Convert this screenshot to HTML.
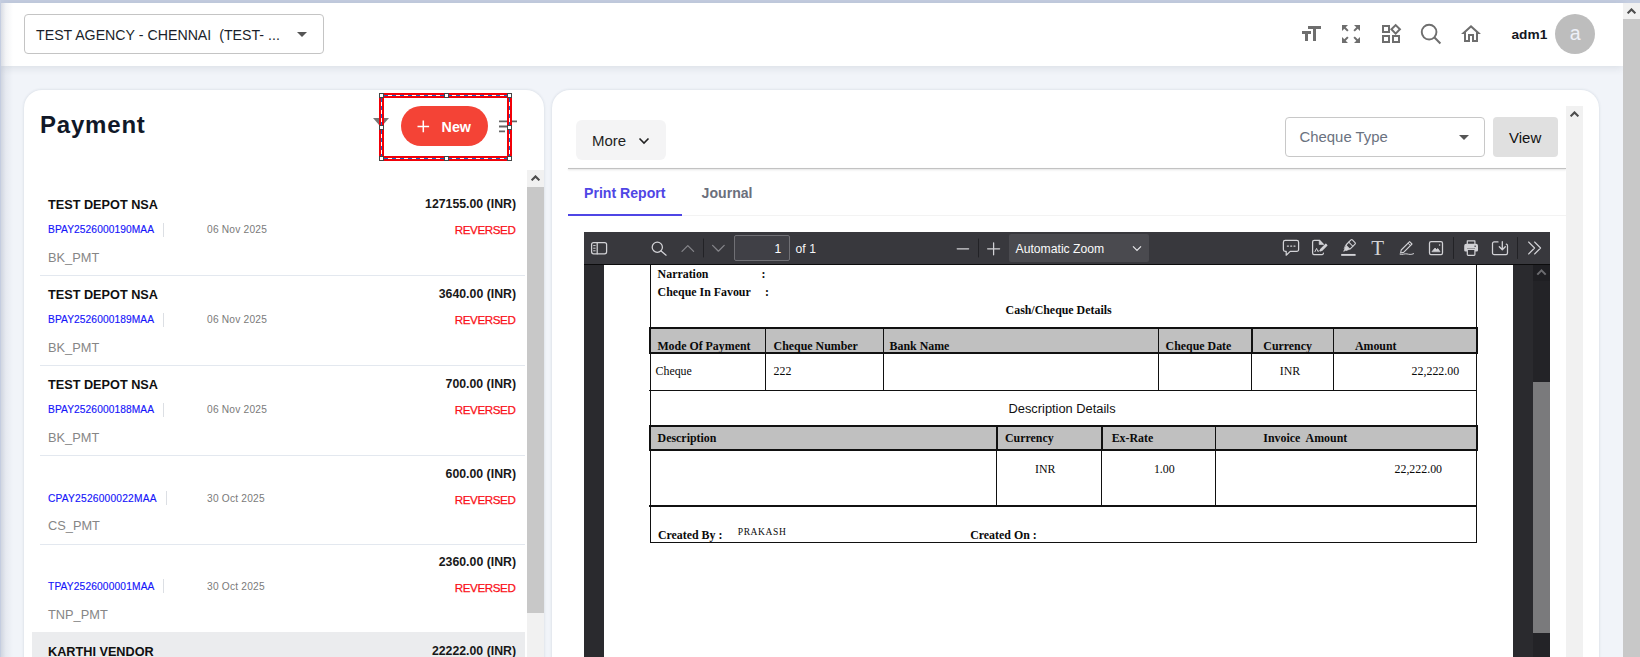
<!DOCTYPE html>
<html lang="en">
<head>
<meta charset="utf-8">
<title>Payment</title>
<style>
*{box-sizing:border-box;margin:0;padding:0}
html,body{width:1640px;height:657px;overflow:hidden}
body{position:relative;background:#f1f4f9;font-family:"Liberation Sans",sans-serif;color:#111;}
.abs{position:absolute}
.t{position:absolute;white-space:nowrap;line-height:1}
/* chrome strips */
#topstrip{left:0;top:0;width:1640px;height:3px;background:#c4cde0}
#leftstrip{left:0;top:0;width:1px;height:657px;background:#c4cde0}
#leftshade{left:1px;top:3px;width:12px;height:654px;background:linear-gradient(90deg,rgba(140,150,172,.32),rgba(140,150,172,.11) 40%,rgba(140,150,172,0))}
/* header */
#header{left:1px;top:3px;width:1622px;height:63px;background:#fff;box-shadow:0 2px 8px rgba(30,40,60,.10)}
#agency{left:24px;top:14px;width:300px;height:40px;border:1px solid #c4c4c4;border-radius:4px;background:#fff}
/* page scrollbar */
#pscroll{left:1623px;top:3px;width:17px;height:654px;background:#f1f1f1}
#pscroll .thumb{left:0;top:16px;width:17px;height:640px;background:#c8c8c8}
/* cards */
.card{background:#fff;border-radius:18px 18px 0 0;box-shadow:0 0 3px rgba(40,60,90,.16)}
#lcard{left:24px;top:90px;width:520px;height:580px}
#rcard{left:552px;top:90px;width:1047px;height:580px}

/* left card */
#title{left:40px;top:113px;font-size:24px;font-weight:700;color:#101828;letter-spacing:.8px}
#newbtn{left:401px;top:106px;width:87px;height:40px;border-radius:20px;background:#f44336}
.row{position:absolute;left:32px;width:493px;height:90px}
.row .nm{left:16px;top:13.8px;font-size:12.7px;font-weight:700;color:#101010}
.row .id{left:16px;top:39.5px;font-size:10.2px;letter-spacing:.1px;color:#1616fa;-webkit-text-stroke:.15px #1616fa}
.row .sep{position:absolute;left:131px;top:38px;width:1px;height:14px;background:#dcdfe4}
.row .dt{left:175px;top:39.9px;font-size:10.2px;letter-spacing:.21px;color:#7a7a7a}
.row .ty{left:16px;top:66.7px;font-size:12.8px;color:#868686}
.row .am{right:9px;top:13px;font-size:12.3px;font-weight:700;color:#181818}
.row .st{right:9.6px;top:39.4px;font-size:11.6px;letter-spacing:-.4px;color:#fa1018;-webkit-text-stroke:.25px #fa1018}
.row .ln{position:absolute;left:8px;right:0;bottom:-1px;height:1px;background:#e3e8ef}
#lscroll{left:527px;top:170px;width:17px;height:500px;background:#f1f1f1}
#lscroll .thumb{left:0;top:17px;width:17px;height:426px;background:#c8c8c8}

/* selection rect */
#sel{left:379px;top:93px;width:133px;height:68px;border:5px solid #f20008}
.dh{position:absolute;height:1px;background:repeating-linear-gradient(90deg,#1468c8 0 4px,#fff 4px 8px)}
.dv{position:absolute;width:1px;background:repeating-linear-gradient(180deg,#1468c8 0 4px,#fff 4px 8px)}
.hd{position:absolute;width:5px;height:5px;background:#fff;border:1px solid #454545}
/* right card */
#more{left:576px;top:120px;width:90px;height:40px;border-radius:6px;background:#f4f4f5}
#chq{left:1285px;top:117px;width:200px;height:40px;border:1px solid #c8c8c8;border-radius:4px;background:#fff}
#view{left:1493px;top:117px;width:65px;height:40px;border-radius:4px;background:#e0e0e0}
#hr1{left:568px;top:168px;width:998px;height:1px;background:#c2c2c2;box-shadow:0 1px 2px rgba(0,0,0,.16)}
#hr2{left:568px;top:215px;width:998px;height:1px;background:#f3f3f3}
#tabul{left:568px;top:213.6px;width:114px;height:2px;background:#4f46e5}
#rscroll{left:1566px;top:106px;width:17px;height:560px;background:#f1f1f1}
/* pdf viewer */
#pdf{left:584px;top:232px;width:966px;height:430px;background:#2a2a2e;overflow:hidden}
#pdftb{left:0;top:0;width:966px;height:33px;background:#38383d;border-bottom:1px solid #0c0c0d}
#pdfpage{left:20px;top:33px;width:909px;height:400px;background:#fff}
#pdfsb{left:949px;top:33px;width:17px;height:400px;background:#232327}
#pdfsb .btn{left:0;top:0;width:17px;height:16px;background:#1f1f23}
#pdfsb .thumb{left:0;top:117px;width:17px;height:251px;background:#7a7a7c}

/* pdf document */
.k{position:absolute;background:#111}
.pb{position:absolute;white-space:nowrap;line-height:1;font-family:"Liberation Serif",serif;font-weight:700;font-size:11.9px;color:#0a0a0a}
.pr{position:absolute;white-space:nowrap;line-height:1;font-family:"Liberation Serif",serif;font-size:11.9px;color:#0a0a0a}
</style>
</head>
<body>
<div class="abs" id="topstrip"></div>
<div class="abs" id="header"></div>
<div class="abs" id="leftstrip"></div>
<div class="abs" id="leftshade"></div>

<!-- HEADER CONTENT -->
<div class="abs" id="agency"></div>
<div class="t" style="left:36px;top:28px;font-size:14.2px;color:#1b1f2a">TEST AGENCY - CHENNAI&nbsp; (TEST- ...</div>
<svg class="abs" style="left:297px;top:32px" width="10" height="5" viewBox="0 0 10 5"><path d="M0 0h10L5 5z" fill="#555"/></svg>

<!-- HEADER ICONS -->
<svg class="abs" style="left:1299px;top:22px" width="24" height="24" viewBox="0 0 24 24"><path fill="#6e6e6e" d="M9 4v3h5v12h3V7h5V4H9zm-6 8h3v7h3v-7h3V9H3v3z"/></svg>
<svg class="abs" style="left:1339px;top:22px" width="24" height="24" viewBox="0 0 24 24"><path fill="#6e6e6e" d="M15 3l2.3 2.3-2.89 2.87 1.42 1.42L18.7 6.7 21 9V3h-6zM3 9l2.3-2.3 2.87 2.89 1.42-1.42L6.7 5.3 9 3H3v6zm6 12l-2.3-2.3 2.89-2.87-1.42-1.42L5.3 17.3 3 15v6h6zm12-6l-2.3 2.3-2.87-2.89-1.42 1.42 2.89 2.87L15 21h6v-6z"/></svg>
<svg class="abs" style="left:1379px;top:22px" width="24" height="24" viewBox="0 0 24 24"><path fill="#6e6e6e" d="M16.66 4.52l2.83 2.83-2.83 2.83-2.83-2.83 2.83-2.83M9 5v4H5V5h4m10 10v4h-4v-4h4M9 15v4H5v-4h4m7.66-13.31L11 7.34 16.66 13l5.66-5.66-5.66-5.65zM11 3H3v8h8V3zm10 10h-8v8h8v-8zm-10 0H3v8h8v-8z"/></svg>
<svg class="abs" style="left:1417px;top:20px" width="28" height="28" viewBox="1417 20 28 28"><circle cx="1429.1" cy="32.1" r="7.350" fill="none" stroke="#6e6e6e" stroke-width="1.9"/><path d="M1434.500 37.500l5.900 6" stroke="#6e6e6e" stroke-width="2" fill="none"/></svg>
<svg class="abs" style="left:1458.7px;top:22px" width="24" height="24" viewBox="0 0 24 24"><path fill="#6e6e6e" d="M12 5.69l5 4.5V18h-2v-6H9v6H7v-7.81l5-4.5M12 3L2 12h3v8h6v-6h2v6h6v-8h3L12 3z"/></svg>
<div class="t" style="left:1511.500px;top:28.300px;font-size:13.7px;font-weight:700;color:#15181f">adm1</div>
<div class="abs" style="left:1555px;top:14px;width:40px;height:40px;border-radius:50%;background:#bdbdbd"></div>
<div class="t" style="left:1569.700px;top:23.500px;font-size:19.500px;color:#eef0f8">a</div>

<!-- PAGE SCROLLBAR -->
<div class="abs" id="pscroll"><div class="abs thumb"></div>
<svg class="abs" style="left:4px;top:5px" width="9" height="6" viewBox="0 0 9 6"><path d="M.6 5.300l3.900-3.900 3.900 3.900" fill="none" stroke="#4d4d4d" stroke-width="2.100"/></svg>
</div>

<!-- CARDS -->
<div class="abs card" id="lcard"></div>
<div class="abs card" id="rcard"></div>

<!-- LEFT CARD CONTENT -->
<div class="t" id="title">Payment</div>
<svg class="abs" style="left:372px;top:117px" width="18" height="10" viewBox="0 0 18 10"><path d="M1 1h16L9.6 9.4h-1.2z" fill="#757575"/></svg>
<div class="abs" id="newbtn"></div>
<svg class="abs" style="left:417px;top:119.500px" width="13" height="13" viewBox="0 0 13 13"><path d="M6.300 0.600v11.600M0.500 6.400h11.600" stroke="#fff" stroke-width="1.5" fill="none"/></svg>
<div class="t" style="left:441.6px;top:120.2px;font-size:14.3px;font-weight:700;color:#fff">New</div>
<svg class="abs" style="left:498px;top:118.700px" width="20" height="16" viewBox="0 0 20 16"><path d="M1 2.300h18M1 7.500h11M1 12.400h6" stroke="#666" stroke-width="1.800" fill="none"/></svg>
<div class="row" style="top:185px;height:90px"><div class="t nm">TEST DEPOT NSA</div><div class="t id">BPAY2526000190MAA</div><div class="sep"></div><div class="t dt">06 Nov 2025</div><div class="t ty">BK_PMT</div><div class="t am">127155.00 (INR)</div><div class="t st">REVERSED</div><div class="ln"></div></div>
<div class="row" style="top:275px;height:90px"><div class="t nm">TEST DEPOT NSA</div><div class="t id">BPAY2526000189MAA</div><div class="sep"></div><div class="t dt">06 Nov 2025</div><div class="t ty">BK_PMT</div><div class="t am">3640.00 (INR)</div><div class="t st">REVERSED</div><div class="ln"></div></div>
<div class="row" style="top:365px;height:90px"><div class="t nm">TEST DEPOT NSA</div><div class="t id">BPAY2526000188MAA</div><div class="sep"></div><div class="t dt">06 Nov 2025</div><div class="t ty">BK_PMT</div><div class="t am">700.00 (INR)</div><div class="t st">REVERSED</div><div class="ln"></div></div>
<div class="row" style="top:455px;height:89px"><div class="t id" style="top:39px;letter-spacing:.22px">CPAY2526000022MAA</div><div class="sep" style="left:134px;top:36px"></div><div class="t dt" style="top:38.900px">30 Oct 2025</div><div class="t ty" style="top:65.400px">CS_PMT</div><div class="t am">600.00 (INR)</div><div class="t st" style="top:38.800px">REVERSED</div><div class="ln"></div></div>
<div class="row" style="top:544px;height:88px"><div class="t id" style="top:38.300px;letter-spacing:.16px">TPAY2526000001MAA</div><div class="sep" style="left:131px;top:35px"></div><div class="t dt" style="top:37.900px">30 Oct 2025</div><div class="t ty" style="top:65px">TNP_PMT</div><div class="t am" style="top:12px">2360.00 (INR)</div><div class="t st" style="top:37.600px">REVERSED</div></div>
<div class="row" style="top:632px;height:40px;background:#ebecee"><div class="t nm">KARTHI VENDOR</div><div class="t am">22222.00 (INR)</div></div>
<div class="abs" id="lscroll"><div class="abs thumb"></div>
<svg class="abs" style="left:4px;top:5px" width="9" height="6" viewBox="0 0 9 6"><path d="M.6 5.300l3.900-3.900 3.900 3.900" fill="none" stroke="#4d4d4d" stroke-width="2.100"/></svg>
</div>

<!-- SELECTION RECT -->
<div class="abs" id="sel"></div>
<div class="dh" style="left:381px;top:95px;width:129px;background-position:-5px 0"></div><div class="dh" style="left:381px;top:158px;width:129px;background-position:-5px 0"></div>
<div class="dv" style="left:381px;top:95px;height:64px;background-position:0 -5px"></div><div class="dv" style="left:509px;top:95px;height:64px;background-position:0 -5px"></div>
<div class="hd" style="left:379px;top:93px"></div><div class="hd" style="left:444px;top:93px"></div><div class="hd" style="left:507px;top:93px"></div>
<div class="hd" style="left:379px;top:125px"></div><div class="hd" style="left:507px;top:125px"></div>
<div class="hd" style="left:379px;top:156px"></div><div class="hd" style="left:444px;top:156px"></div><div class="hd" style="left:507px;top:156px"></div>

<!-- RIGHT CARD CONTENT -->
<div class="abs" id="more"></div>
<div class="t" style="left:592px;top:133px;font-size:15px;color:#1f1f1f">More</div>
<svg class="abs" style="left:638px;top:137px" width="12" height="8" viewBox="0 0 12 8"><path d="M1.5 1.5l4.5 4.5 4.5-4.5" fill="none" stroke="#222" stroke-width="1.6"/></svg>
<div class="abs" id="chq"></div>
<div class="t" style="left:1299.500px;top:129.600px;font-size:14.900px;color:#6b7280">Cheque Type</div>
<svg class="abs" style="left:1459px;top:135px" width="10" height="5" viewBox="0 0 10 5"><path d="M0 0h10L5 5z" fill="#555"/></svg>
<div class="abs" id="view"></div>
<div class="t" style="left:1509px;top:130px;font-size:15px;color:#111">View</div>
<div class="abs" id="hr1"></div>
<div class="abs" id="hr2"></div>
<div class="abs" id="tabul"></div>
<div class="t" style="left:584px;top:186px;font-size:14.1px;font-weight:700;color:#4f46e5">Print Report</div>
<div class="t" style="left:701.6px;top:186px;font-size:14.1px;font-weight:700;color:#6b6f7c">Journal</div>
<div class="abs" id="rscroll">
<svg class="abs" style="left:4px;top:5px" width="9" height="6" viewBox="0 0 9 6"><path d="M.6 5.300l3.900-3.900 3.900 3.900" fill="none" stroke="#4d4d4d" stroke-width="2.100"/></svg>
</div>

<!-- PDF VIEWER -->
<div class="abs" id="pdf">
<div class="abs" id="pdfpage"></div>
<div class="abs" id="pdfsb"><div class="abs btn"></div><svg class="abs" style="left:3px;top:3px" width="11" height="8" viewBox="0 0 11 8"><path d="M1.300 6.600l4.200-4.200 4.200 4.200" fill="none" stroke="#6c6c70" stroke-width="2"/></svg><div class="abs thumb"></div></div>
<div class="abs" id="pdftb"></div>
</div>

<!-- PDF TOOLBAR ICONS -->
<svg class="abs" style="left:584px;top:232px" width="966" height="32" viewBox="584 232 966 32" fill="none" stroke="#d2d2d6" stroke-width="1.25" stroke-linecap="round" stroke-linejoin="round">
<!-- sidebar toggle -->
<rect x="591.6" y="242.6" width="15" height="11.2" rx="2"/><path d="M597.2 242.6v11.2"/><path d="M593.6 245.6h1.6M593.6 248.2h1.6M593.6 250.8h1.6" stroke-width="1"/>
<!-- find -->
<circle cx="657.3" cy="247.2" r="5.1"/><path d="M661.1 251l5 4.2"/>
<!-- prev / next -->
<path d="M682 251.4l5.8-5.8 5.8 5.8" stroke="#85858a"/>
<path d="M703.5 239v18" stroke="#222226" stroke-width="1"/>
<path d="M712.6 245.4l5.8 5.8 5.8-5.8" stroke="#85858a"/>
<!-- zoom -->
<path d="M957.2 248.8h11.4"/>
<path d="M978.5 239v18" stroke="#222226" stroke-width="1"/>
<path d="M987.6 248.8h12M993.6 242.8v12"/>
<!-- comment -->
<path d="M1285.2 240.4h11.6a1.8 1.8 0 0 1 1.8 1.8v7.4a1.8 1.8 0 0 1-1.8 1.8h-6.6l-4 3.8v-3.8h-1a1.8 1.8 0 0 1-1.8-1.8v-7.4a1.8 1.8 0 0 1 1.8-1.8z"/>
<path d="M1287.4 246.1h1M1290.7 246.1h1M1294 246.1h1" stroke-width="1.3"/>
<!-- signature -->
<path d="M1323.4 253.2a1.6 1.6 0 0 1-1.6 1.5h-7.6a1.6 1.6 0 0 1-1.6-1.6v-11.2a1.6 1.6 0 0 1 1.6-1.6h5.2l3.8 3.8"/>
<path d="M1319.2 240.6v3.9h3.9z" fill="#d2d2d6" stroke-width=".6"/>
<path d="M1315 251.6l1.6-3.2 1.2 3 1.4-.6" stroke-width="1"/>
<path d="M1326.9 245.3l-5.2 5.2-1.5.4.4-1.5 5.2-5.2z" fill="#d2d2d6" stroke-width="1.2"/>
<!-- highlight -->
<g transform="translate(1348.900 246.100) rotate(45)"><rect x="-2.900" y="-6.800" width="5.800" height="8.400" rx="1" stroke-width="1.150"/><path d="M-2.900 -2.700h5.800" stroke-width="1"/><path d="M-2.600 1.800h5.200l-1.300 3.400h-.500l-.800 2.200-.800-2.200h-.500z" fill="#d2d2d6" stroke-width=".6"/></g>
<path d="M1341.2 254.9h14.4" stroke-width="1.9" stroke-linecap="butt"/>
<!-- pen -->
<path d="M1409.6 241.6l2.4 2.4-8.4 8.4-3 .6.6-3z" stroke-width="1.1"/><path d="M1408 243.2l2.4 2.4" stroke-width="1"/>
<path d="M1400 254.2c2.4 1 4.4-.9 7-.3 2 .5 4 1 6.600-.2" stroke-width="1"/>
<!-- image -->
<rect x="1429.5" y="241.6" width="13" height="13" rx="1.6"/>
<path d="M1432.200 251.400l2.800-3.300 1.600 1.500 1.300-1 1.900 2.800z" fill="#d2d2d6" stroke-width=".8"/><circle cx="1439.6" cy="245" r=".8" fill="#d2d2d6" stroke="none"/>
<path d="M1453.500 237.500v21" stroke="#222226" stroke-width="1"/>
<!-- print -->
<path d="M1467.300 243.500v-2.600h7.600v2.600" stroke-width="1.2"/>
<path d="M1466.200 243.800h9.800a2 2 0 0 1 2 2v4.500a1.300 1.300 0 0 1-1.300 1.300h-1.700v-3.200h-7.800v3.200h-1.700a1.300 1.300 0 0 1-1.300-1.300v-4.500a2 2 0 0 1 2-2z" fill="#d2d2d6" stroke="none"/>
<rect x="1467.300" y="249.300" width="7.600" height="6" rx=".8" stroke-width="1.2"/>
<rect x="1474.500" y="245.600" width="1.300" height="1.300" fill="#38383d" stroke="none"/>
<!-- download -->
<path d="M1498 241.900h-3.800a1.700 1.700 0 0 0-1.700 1.700v9.300a1.700 1.700 0 0 0 1.700 1.700h11.600a1.700 1.700 0 0 0 1.700-1.700v-7.200a1.700 1.700 0 0 0-1.200-1.600"/>
<path d="M1502.300 241.700v7.600M1499.300 246.700l3 3 3-3" stroke-width="1.3"/>
<path d="M1517.500 237.500v21" stroke="#222226" stroke-width="1"/>
<!-- more -->
<path d="M1528.600 242l6 6-6 6M1534.600 242l6 6-6 6" stroke-width="1.100"/>
</svg>
<div class="t" style="left:1371.300px;top:238px;font-size:21px;font-family:'Liberation Serif',serif;color:#d2d2d6">T</div>
<div class="abs" style="left:734px;top:235px;width:56px;height:26px;border:1px solid #707075;border-radius:2px;background:#404046"></div>
<div class="t" style="left:774.5px;top:242.5px;font-size:12.2px;color:#fff">1</div>
<div class="t" style="left:795.6px;top:242.5px;font-size:12.2px;color:#f4f4f6">of 1</div>
<div class="abs" style="left:1009px;top:234px;width:140px;height:28px;background:#4a4a4f;border-radius:2px"></div>
<div class="t" style="left:1015.5px;top:242.5px;font-size:12.2px;color:#fafafa">Automatic Zoom</div>
<svg class="abs" style="left:1132px;top:245px" width="10" height="7" viewBox="0 0 10 7"><path d="M1 1.400l4 4 4-4" fill="none" stroke="#e8e8ea" stroke-width="1.200"/></svg>

<!-- PDF DOCUMENT -->
<div class="k" style="left:649.7px;top:265px;width:1.5px;height:278px"></div><div class="k" style="left:1475.5px;top:265px;width:1.5px;height:278px"></div><div class="k" style="left:650px;top:541.5px;width:827px;height:1.5px"></div><div class="abs" style="left:649px;top:327.3px;width:828.5px;height:26.6px;background:#c0c0c0;border:2.6px solid #111;border-bottom-width:2.9px"></div><div class="k" style="left:764.6px;top:329px;width:1.9px;height:23px"></div><div class="k" style="left:764.9px;top:352px;width:1.4px;height:38.5px"></div><div class="k" style="left:882.6px;top:329px;width:1.9px;height:23px"></div><div class="k" style="left:882.9px;top:352px;width:1.4px;height:38.5px"></div><div class="k" style="left:1157.6px;top:329px;width:1.9px;height:23px"></div><div class="k" style="left:1157.8999999999999px;top:352px;width:1.4px;height:38.5px"></div><div class="k" style="left:1250.8px;top:329px;width:1.9px;height:23px"></div><div class="k" style="left:1251.1px;top:352px;width:1.4px;height:38.5px"></div><div class="k" style="left:1332.6px;top:329px;width:1.9px;height:23px"></div><div class="k" style="left:1332.8999999999999px;top:352px;width:1.4px;height:38.5px"></div><div class="k" style="left:648.8px;top:389.8px;width:828.6px;height:1.5px"></div><div class="abs" style="left:649px;top:425.3px;width:828.5px;height:26px;background:#c0c0c0;border:2.6px solid #111;border-bottom-width:2.9px"></div><div class="k" style="left:995.8px;top:427px;width:1.9px;height:23px"></div><div class="k" style="left:996.0999999999999px;top:450px;width:1.4px;height:56px"></div><div class="k" style="left:1100.8px;top:427px;width:1.9px;height:23px"></div><div class="k" style="left:1101.1px;top:450px;width:1.4px;height:56px"></div><div class="k" style="left:1214.6px;top:427px;width:1.9px;height:23px"></div><div class="k" style="left:1214.8999999999999px;top:450px;width:1.4px;height:56px"></div><div class="k" style="left:648.8px;top:505.2px;width:828.6px;height:1.5px"></div><div class="pb" style="left:657.6px;top:268.6px">Narration</div><div class="pb" style="left:761.4px;top:268.6px">:</div>
<div class="pb" style="left:657.6px;top:287.4px">Cheque In Favour</div><div class="pb" style="left:765px;top:287.4px">:</div>
<div class="pb" style="left:1005.6px;top:305.4px">Cash/Cheque Details</div>
<div class="pb" style="left:657.4px;top:341.4px">Mode Of Payment</div><div class="pb" style="left:773.6px;top:341.4px">Cheque Number</div><div class="pb" style="left:889.6px;top:341.4px">Bank Name</div><div class="pb" style="left:1165.6px;top:341.4px">Cheque Date</div><div class="pb" style="left:1263.3px;top:341.4px">Currency</div><div class="pb" style="left:1354.9px;top:341.4px">Amount</div>
<div class="pr" style="left:655.5px;top:366.4px">Cheque</div><div class="pr" style="left:773.6px;top:366.4px">222</div><div class="pr" style="left:1279.7px;top:366.4px">INR</div><div class="pr" style="left:1411.6px;top:366.4px">22,222.00</div>
<div class="t" style="left:1008.5px;top:402.600px;font-size:12.85px;color:#111">Description Details</div>
<div class="pb" style="left:657.6px;top:433.4px">Description</div><div class="pb" style="left:1005px;top:433.4px">Currency</div><div class="pb" style="left:1111.7px;top:433.4px">Ex-Rate</div><div class="pb" style="left:1263.3px;top:433.4px">Invoice&nbsp; Amount</div>
<div class="pr" style="left:1035px;top:464.2px">INR</div><div class="pr" style="left:1153.9px;top:464.2px">1.00</div><div class="pr" style="left:1394.5px;top:464.2px">22,222.00</div>
<div class="pb" style="left:657.9px;top:530.2px">Created By :</div><div class="pr" style="left:737.8px;top:527.8px;font-size:9.5px;letter-spacing:.6px">PRAKASH</div><div class="pb" style="left:970.2px;top:530.2px">Created On :</div>

</body>
</html>
